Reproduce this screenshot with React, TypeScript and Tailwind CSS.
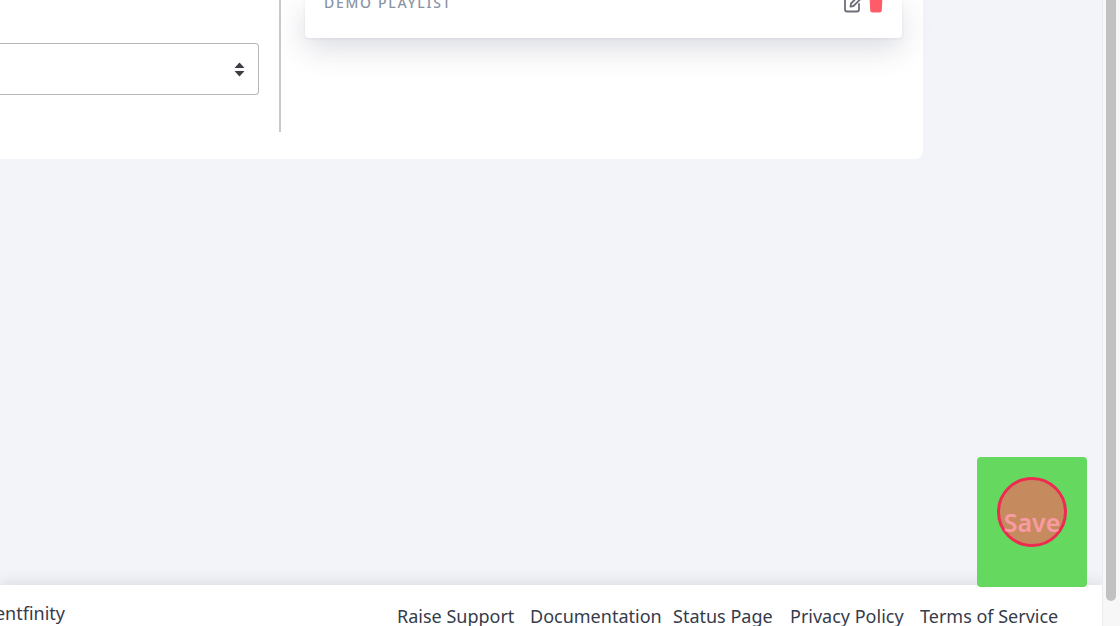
export default function App() {
  return (
    <div className="relative flex h-[626px] w-[1120px] overflow-hidden bg-[#f3f4f9] font-['Noto_Sans',sans-serif]">
      <div className="flex min-w-0 flex-1 flex-col">
        {/* Main panel, scrolled past the top of the page */}
        <div className="flex h-[159px] w-[923px] rounded-br-lg bg-white">
          <div className="h-[132px] w-[281px] border-r-2 border-[#c8c9cd]">
            <div className="mt-[43px] flex h-[52px] w-[259px] items-center justify-end rounded-r-[4px] border border-l-0 border-[#b5b6ba] bg-white pr-[13px]">
              <svg width="11" height="15" viewBox="0 0 11 15" className="text-[#3c3c44]">
                <path d="M5.5 0.5 L10.5 6 L0.5 6 Z" fill="currentColor" />
                <path d="M0.5 9 L10.5 9 L5.5 14.5 Z" fill="currentColor" />
              </svg>
            </div>
          </div>

          {/* Playlist card */}
          <div className="ml-[24px] flex h-[38px] w-[597px] items-start justify-between rounded-b-[4px] bg-white pl-[19px] pr-[19px] shadow-[0_10px_30px_rgba(50,55,90,0.18),0_1px_3px_rgba(50,55,90,0.08)]">
            <span className="mt-[-6px] text-sm font-medium leading-[18px] tracking-[1.7px] text-[#8a93a3]">
              DEMO PLAYLIST
            </span>
            <div className="mt-[-6px] flex items-start gap-[6px]">
              <svg width="19" height="19" viewBox="0 0 19 19" fill="none" stroke="#6e6f7a" strokeWidth="1.8" strokeLinecap="round" strokeLinejoin="round">
                <path d="M9 3.5 H3 A2 2 0 0 0 1 5.5 V15.5 A2 2 0 0 0 3 17.5 H13 A2 2 0 0 0 15 15.5 V10" />
                <path d="M14.5 2 L17 4.5 L9.5 12 L6.5 12.7 L7 9.5 Z" />
              </svg>
              <svg width="14" height="18" viewBox="0 0 14 18" className="mt-px">
                <path d="M0.4 0 H13.6 L12.8 15 A2.5 2.5 0 0 1 10.3 17.5 H3.7 A2.5 2.5 0 0 1 1.2 15 Z" fill="#ff5c6a" />
              </svg>
            </div>
          </div>
        </div>

        <div className="flex-1" />

        {/* Footer */}
        <footer className="flex h-[41px] items-start justify-between bg-white pr-[43px] shadow-[0_-4px_14px_rgba(40,45,70,0.1)]">
          <div className="flex w-[65px] justify-end overflow-hidden whitespace-nowrap pt-[16px] text-[18px] leading-[24px] text-[#363b4a]">
            Contentfinity
          </div>
          <nav className="flex pt-[19px] text-[18px] leading-[25px] whitespace-nowrap text-[#363b4a]">
            <span className="w-[133px]">Raise Support</span>
            <span className="w-[143px]">Documentation</span>
            <span className="w-[117px]">Status Page</span>
            <span className="w-[130px]">Privacy Policy</span>
            <span className="w-[139px]">Terms of Service</span>
          </nav>
        </footer>
      </div>

      {/* Scrollbar */}
      <div className="w-[18px] border-l border-[#ececf0] bg-[#f7f7f8] pl-[3px]">
        <div className="h-[601px] w-[10px] rounded-b-[5px] bg-[#c1c1c1]" />
      </div>

      {/* Floating save button highlight */}
      <div className="absolute left-[977px] top-[457px] flex h-[130px] w-[110px] justify-center rounded-[4px] bg-[#65d95f] pt-[20px]">
        <div className="relative flex h-[70px] w-[70px] items-center justify-center rounded-full border-[3px] border-[#ee2a50] bg-[#c68a5f]">
          <span className="mt-[19px] text-[25px] font-semibold leading-[30px] text-[#f89ba3]">Save</span>
        </div>
      </div>
    </div>
  );
}
